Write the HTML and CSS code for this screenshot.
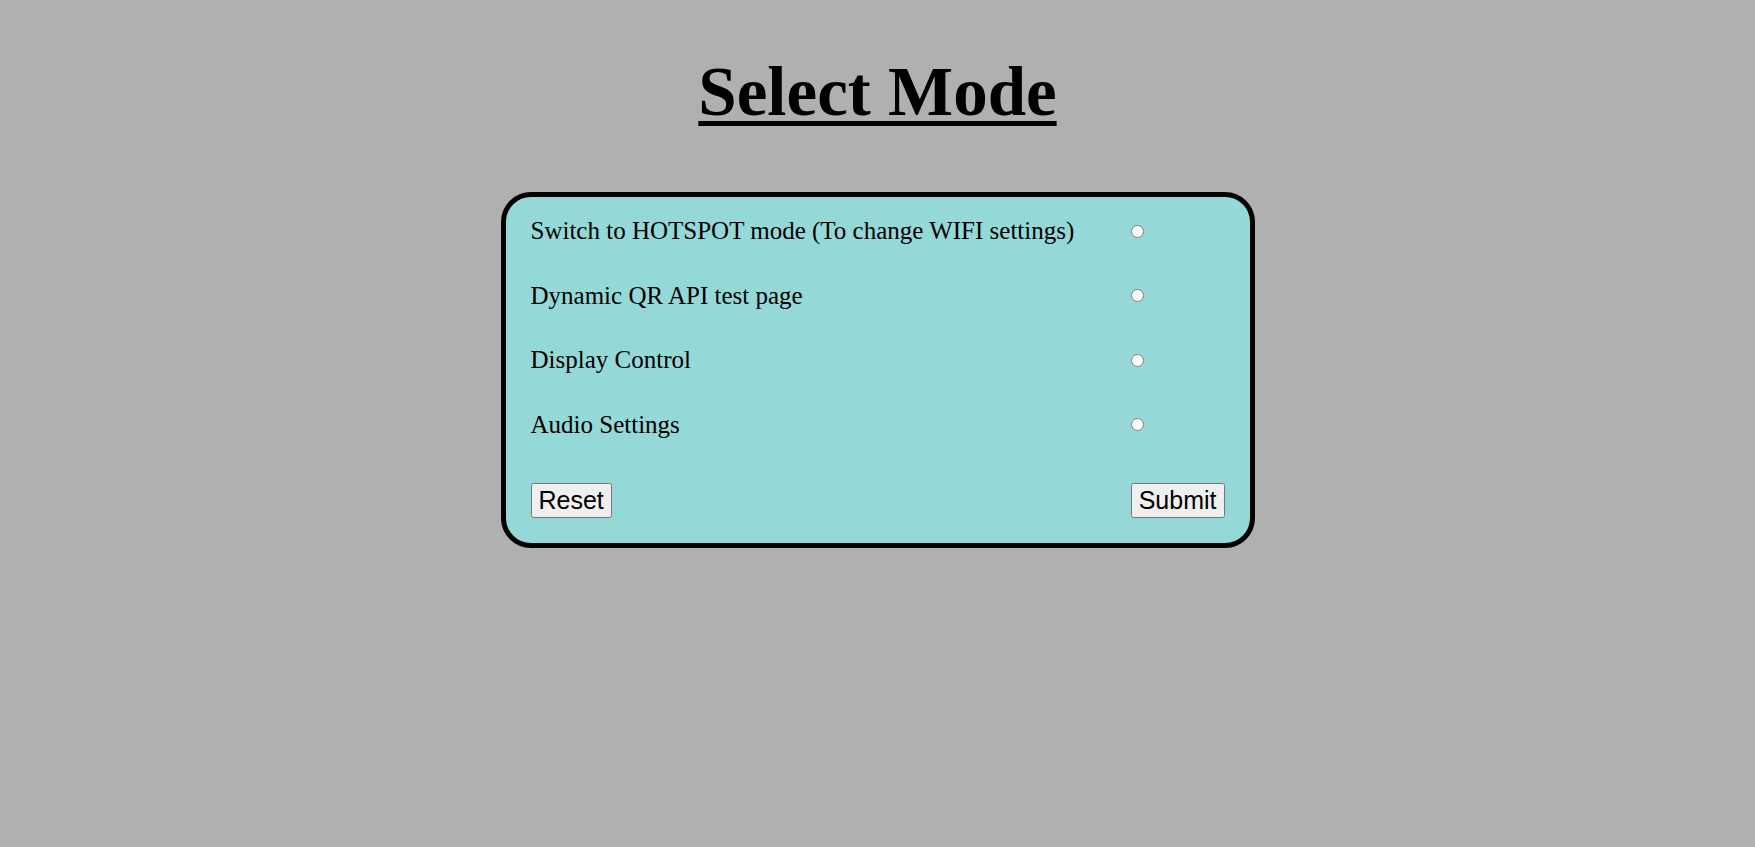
FILE: index.html
```html
<!DOCTYPE html>
<html lang="en">
<head>
    <meta charset="UTF-8">
    <meta name="viewport" content="width=device-width, initial-scale=1.0">
    <title>Select Mode</title>
    <link rel="stylesheet" href="styles.css">
</head>
<body>
    <h1>Select Mode</h1>

    <form class="mode-form" id="mode-form">
        <label class="mode-option">
            <span class="mode-name">Switch to HOTSPOT mode (To change WIFI settings)</span>
            <input type="radio" name="mode" value="hotspot">
        </label>
        <label class="mode-option">
            <span class="mode-name">Dynamic QR API test page</span>
            <input type="radio" name="mode" value="qr">
        </label>
        <label class="mode-option">
            <span class="mode-name">Display Control</span>
            <input type="radio" name="mode" value="display">
        </label>
        <label class="mode-option">
            <span class="mode-name">Audio Settings</span>
            <input type="radio" name="mode" value="audio">
        </label>

        <button type="reset" class="reset-button">Reset</button>
        <button type="submit" class="submit-button">Submit</button>
    </form>
</body>
</html>
```

FILE: styles.css
```css
body {
    margin: 0;
    background-color: #b0b0b0;
    color: #000;
    font-family: "Liberation Serif", "Times New Roman", serif;
}

h1 {
    margin: 53px 0 60px;
    text-align: center;
    font-size: 69px;
    font-weight: bold;
    text-decoration: underline;
    text-decoration-thickness: 5px;
    text-underline-offset: 6px;
}

.mode-form {
    box-sizing: border-box;
    width: 754px;
    margin: 0 auto;
    padding: 2px 25px 25px 25px;
    background-color: #95d8d8;
    border: 5px solid #000;
    border-radius: 30px;
    display: grid;
    grid-template-columns: 1fr auto;
}

/* each label spreads its text and radio over the two grid columns */
.mode-option {
    display: contents;
    cursor: pointer;
}

.mode-name {
    height: 64.5px;
    display: flex;
    align-items: center;
    font-size: 25px;
}

.mode-option input[type="radio"] {
    justify-self: start;
    align-self: center;
    margin: 0;
    width: 13px;
    height: 13px;
}

.reset-button,
.submit-button {
    margin-top: 26px;
    font-family: "Liberation Sans", Arial, sans-serif;
    font-size: 25px;
}

.reset-button {
    justify-self: start;
}

.submit-button {
    justify-self: end;
}
```
